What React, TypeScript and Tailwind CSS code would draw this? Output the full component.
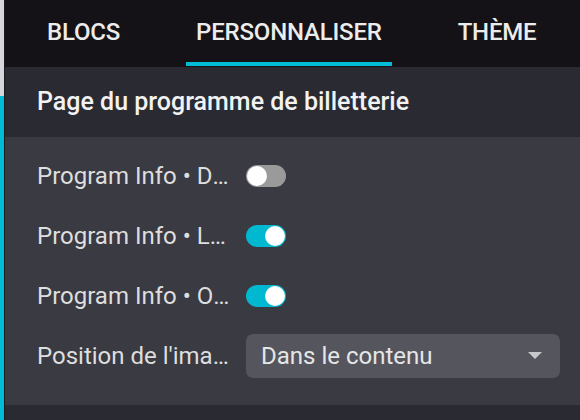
import React, { useState } from 'react';

const Toggle: React.FC<{ on: boolean; onClick: () => void }> = ({ on, onClick }) => (
  <button
    onClick={onClick}
    className={`relative w-[40px] h-[22px] rounded-full shrink-0 ${on ? 'bg-[#00b8d0]' : 'bg-[#9a9a9a]'}`}
  >
    <span
      className={`absolute top-[1px] w-[20px] h-[20px] rounded-full bg-white ${on ? 'left-[19px]' : 'left-[1px]'}`}
    />
  </button>
);

const App: React.FC = () => {
  const [toggles, setToggles] = useState([false, true, true]);
  const labels = ['Program Info • Date', 'Program Info • Localisation', 'Program Info • Organisateur'];

  return (
    <div className="flex w-[580px] h-[420px] overflow-hidden bg-[#3a3a42] font-['Roboto',sans-serif]">
      {/* left edge strip */}
      <div className="flex flex-col w-[4px] shrink-0">
        <div className="h-[96px] bg-[#d6d6da]" />
        <div className="flex-1 bg-[#00bcd4]" />
      </div>
      <div className="w-[1px] shrink-0 bg-[#1c1b21]" />

      <div className="flex flex-col flex-1 min-w-0">
        {/* tabs */}
        <div className="flex h-[67px] bg-[#141217] pl-[32px] gap-[56px] text-[24px] font-medium text-[#ececec] tracking-[-0.2px]">
          {['BLOCS', 'PERSONNALISER', 'THÈME'].map((t, i) => (
            <div key={t} className="relative flex items-center px-[10px] pb-[4px] whitespace-nowrap">
              {t}
              {i === 1 && <div className="absolute left-0 right-0 bottom-[1px] h-[4px] bg-[#00bcd4]" />}
            </div>
          ))}
        </div>

        {/* section header */}
        <div className="flex items-center h-[70px] bg-[#2a2a32] px-[32px] text-[25px] font-medium text-[#f2f2f2] whitespace-nowrap">
          Page du programme de billetterie
        </div>

        {/* rows */}
        <div className="flex flex-col flex-1 pl-[32px] pr-[20px] pt-[9px] text-[24px] text-[#dedede]">
          {labels.map((l, i) => (
            <div key={l} className="flex items-center h-[60px] gap-[14px]">
              <span className="w-[195px] truncate">{l}</span>
              <Toggle
                on={toggles[i]}
                onClick={() => setToggles(toggles.map((v, j) => (j === i ? !v : v)))}
              />
            </div>
          ))}
          <div className="flex items-center h-[60px] gap-[14px]">
            <span className="w-[195px] truncate">Position de l'image</span>
            <div className="flex items-center justify-between flex-1 h-[44px] rounded-[7px] bg-[#55555e] pl-[15px] pr-[18px] text-[#e6e6e6]">
              <span>Dans le contenu</span>
              <svg width="14" height="8" viewBox="0 0 14 8">
                <path d="M0 0 L14 0 L7 7 Z" fill="#c8c8cc" />
              </svg>
            </div>
          </div>
        </div>

        <div className="h-[15px] bg-[#2a2a32]" />
      </div>
    </div>
  );
};

export default App;
